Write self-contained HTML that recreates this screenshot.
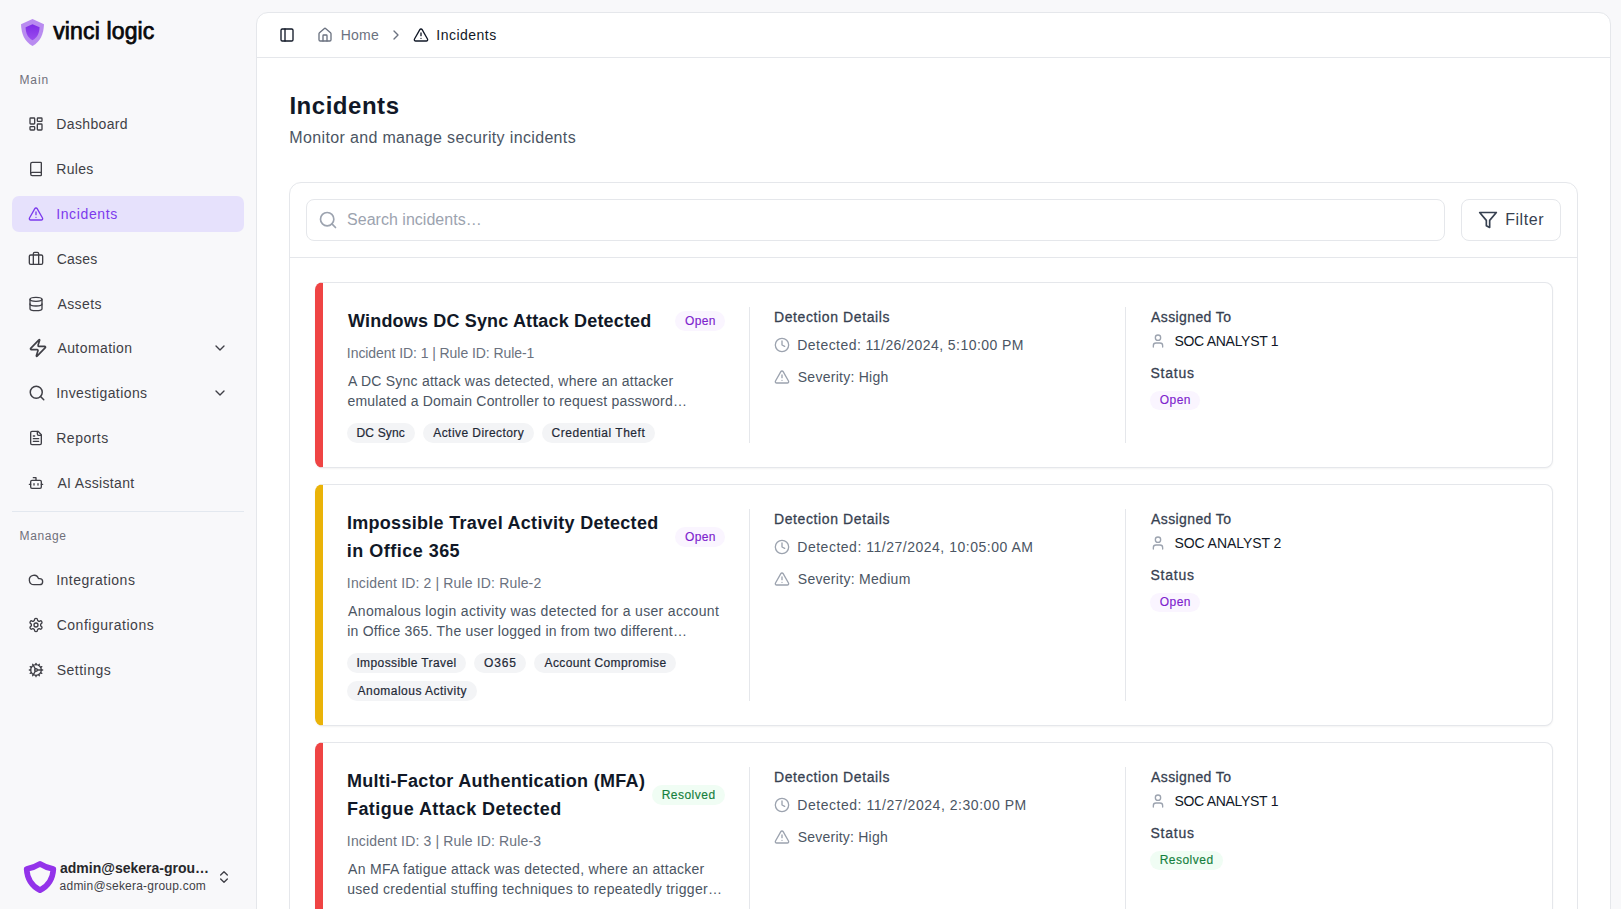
<!DOCTYPE html>
<html><head><meta charset="utf-8"><style>
*{box-sizing:border-box;margin:0;padding:0}
html,body{width:1621px;height:909px;overflow:hidden}
body{background:#f8f8fa;font-family:"Liberation Sans",sans-serif;position:relative}
.abs{position:absolute}
.t{position:absolute;white-space:nowrap}
svg.i{position:absolute;fill:none;stroke:currentColor;stroke-width:2;stroke-linecap:round;stroke-linejoin:round;overflow:visible}
</style></head><body>
<svg class="abs" style="left:21px;top:19px" width="23" height="27" viewBox="0 0 23 27"><defs><linearGradient id="lg" x1="0" y1="0" x2="0" y2="1"><stop offset="0" stop-color="#7e2ae6"/><stop offset="1" stop-color="#9a4cee"/></linearGradient></defs><path d="M11.5 0 L23 5.2 C22.6 15 19.5 22.5 11.5 27 C3.5 22.5 0.4 15 0 5.2 Z" fill="#b98bf0"/><path d="M11.5 5.2 L18.6 8.3 C18.3 14.5 16 18.8 11.5 21.2 C7 18.8 4.7 14.5 4.6 8.3 Z" fill="url(#lg)"/></svg>
<div class="t" style="left:53.17px;top:16.63px;font-size:23px;line-height:28px;color:#09090b;letter-spacing:0.150px;-webkit-text-stroke:0.75px #09090b;">vinci logic</div>
<div class="t" style="left:19.40px;top:71.64px;font-size:12px;line-height:16px;color:#70707b;letter-spacing:0.917px;">Main</div>
<svg class="i" style="left:28px;top:116px;width:16px;height:16px;color:#3f3f46;stroke-width:2" viewBox="0 0 24 24"><rect width="7" height="9" x="3" y="3" rx="1"/><rect width="7" height="5" x="14" y="3" rx="1"/><rect width="7" height="9" x="14" y="12" rx="1"/><rect width="7" height="5" x="3" y="16" rx="1"/></svg>
<div class="t" style="left:56.27px;top:114.15px;font-size:14px;line-height:20px;color:#3f3f46;letter-spacing:0.363px;">Dashboard</div>
<svg class="i" style="left:28px;top:161px;width:16px;height:16px;color:#3f3f46;stroke-width:2" viewBox="0 0 24 24"><path d="M4 19.5v-15A2.5 2.5 0 0 1 6.5 2H19a1 1 0 0 1 1 1v18a1 1 0 0 1-1 1H6.5a1 1 0 0 1 0-5H20"/></svg>
<div class="t" style="left:56.27px;top:159.15px;font-size:14px;line-height:20px;color:#3f3f46;letter-spacing:0.294px;">Rules</div>
<div class="abs" style="left:12px;top:196px;width:232px;height:36px;background:#e6e1fc;border-radius:7px"></div>
<svg class="i" style="left:28px;top:206px;width:16px;height:16px;color:#7c3aed;stroke-width:2" viewBox="0 0 24 24"><path d="m21.73 18-8-14a2 2 0 0 0-3.48 0l-8 14A2 2 0 0 0 4 21h16a2 2 0 0 0 1.73-3"/><path d="M12 9v4"/><path d="M12 17h.01"/></svg>
<div class="t" style="left:56.15px;top:204.15px;font-size:14px;line-height:20px;color:#7c3aed;letter-spacing:0.644px;">Incidents</div>
<svg class="i" style="left:28px;top:251px;width:16px;height:16px;color:#3f3f46;stroke-width:2" viewBox="0 0 24 24"><path d="M16 20V4a2 2 0 0 0-2-2h-4a2 2 0 0 0-2 2v16"/><rect width="20" height="14" x="2" y="6" rx="2"/></svg>
<div class="t" style="left:56.65px;top:249.15px;font-size:14px;line-height:20px;color:#3f3f46;letter-spacing:0.256px;">Cases</div>
<svg class="i" style="left:28px;top:296px;width:16px;height:16px;color:#3f3f46;stroke-width:2" viewBox="0 0 24 24"><ellipse cx="12" cy="5" rx="9" ry="3"/><path d="M3 5V19A9 3 0 0 0 21 19V5"/><path d="M3 12A9 3 0 0 0 21 12"/></svg>
<div class="t" style="left:57.40px;top:294.15px;font-size:14px;line-height:20px;color:#3f3f46;letter-spacing:0.440px;">Assets</div>
<svg class="i" style="left:28px;top:338px;width:20px;height:20px;color:#3f3f46;stroke-width:2" viewBox="0 0 24 24"><path d="M4 14a1 1 0 0 1-.78-1.63l9.9-10.2a.5.5 0 0 1 .86.46l-1.92 6.02A1 1 0 0 0 13 10h7a1 1 0 0 1 .78 1.63l-9.9 10.2a.5.5 0 0 1-.86-.46l1.92-6.02A1 1 0 0 0 11 14z"/></svg>
<div class="t" style="left:57.40px;top:337.85px;font-size:14px;line-height:20px;color:#3f3f46;letter-spacing:0.425px;">Automation</div>
<svg class="i" style="left:212px;top:340px;width:16px;height:16px;color:#3f3f46;stroke-width:2" viewBox="0 0 24 24"><path d="m6 9 6 6 6-6"/></svg>
<svg class="i" style="left:28px;top:384px;width:18px;height:18px;color:#3f3f46;stroke-width:2" viewBox="0 0 24 24"><circle cx="11" cy="11" r="8"/><path d="m21 21-4.3-4.3"/></svg>
<div class="t" style="left:56.15px;top:383.15px;font-size:14px;line-height:20px;color:#3f3f46;letter-spacing:0.410px;">Investigations</div>
<svg class="i" style="left:212px;top:385px;width:16px;height:16px;color:#3f3f46;stroke-width:2" viewBox="0 0 24 24"><path d="m6 9 6 6 6-6"/></svg>
<svg class="i" style="left:28px;top:430px;width:16px;height:16px;color:#3f3f46;stroke-width:2" viewBox="0 0 24 24"><path d="M15 2H6a2 2 0 0 0-2 2v16a2 2 0 0 0 2 2h12a2 2 0 0 0 2-2V7Z"/><path d="M14 2v4a2 2 0 0 0 2 2h4"/><path d="M10 9H8"/><path d="M16 13H8"/><path d="M16 17H8"/></svg>
<div class="t" style="left:56.27px;top:427.95px;font-size:14px;line-height:20px;color:#3f3f46;letter-spacing:0.487px;">Reports</div>
<svg class="i" style="left:28px;top:475px;width:16px;height:16px;color:#3f3f46;stroke-width:2" viewBox="0 0 24 24"><path d="M12 8V4H8"/><rect width="16" height="12" x="4" y="8" rx="2"/><path d="M2 14h2"/><path d="M20 14h2"/><path d="M15 13v2"/><path d="M9 13v2"/></svg>
<div class="t" style="left:57.40px;top:473.15px;font-size:14px;line-height:20px;color:#3f3f46;letter-spacing:0.327px;">AI Assistant</div>
<svg class="i" style="left:28px;top:572px;width:16px;height:16px;color:#3f3f46;stroke-width:2" viewBox="0 0 24 24"><path d="M17.5 19H9a7 7 0 1 1 6.71-9h1.79a4.5 4.5 0 1 1 0 9Z"/></svg>
<div class="t" style="left:56.15px;top:570.15px;font-size:14px;line-height:20px;color:#3f3f46;letter-spacing:0.511px;">Integrations</div>
<svg class="i" style="left:28px;top:617px;width:16px;height:16px;color:#3f3f46;stroke-width:2" viewBox="0 0 24 24"><path d="M12.22 2h-.44a2 2 0 0 0-2 2v.18a2 2 0 0 1-1 1.73l-.43.25a2 2 0 0 1-2 0l-.15-.08a2 2 0 0 0-2.73.73l-.22.38a2 2 0 0 0 .73 2.73l.15.1a2 2 0 0 1 1 1.72v.51a2 2 0 0 1-1 1.74l-.15.09a2 2 0 0 0-.73 2.73l.22.38a2 2 0 0 0 2.73.73l.15-.08a2 2 0 0 1 2 0l.43.25a2 2 0 0 1 1 1.73V20a2 2 0 0 0 2 2h.44a2 2 0 0 0 2-2v-.18a2 2 0 0 1 1-1.73l.43-.25a2 2 0 0 1 2 0l.15.08a2 2 0 0 0 2.73-.73l.22-.39a2 2 0 0 0-.73-2.73l-.15-.08a2 2 0 0 1-1-1.74v-.5a2 2 0 0 1 1-1.74l.15-.09a2 2 0 0 0 .73-2.73l-.22-.38a2 2 0 0 0-2.73-.73l-.15.08a2 2 0 0 1-2 0l-.43-.25a2 2 0 0 1-1-1.73V4a2 2 0 0 0-2-2z"/><circle cx="12" cy="12" r="3"/></svg>
<div class="t" style="left:56.65px;top:615.15px;font-size:14px;line-height:20px;color:#3f3f46;letter-spacing:0.523px;">Configurations</div>
<svg class="i" style="left:28px;top:662px;width:16px;height:16px;color:#3f3f46;stroke-width:2" viewBox="0 0 24 24"><path d="M12 20a8 8 0 1 0 0-16 8 8 0 0 0 0 16Z"/><path d="M12 14a2 2 0 1 0 0-4 2 2 0 0 0 0 4Z"/><path d="M12 2v2"/><path d="M12 22v-2"/><path d="m17 20.66-1-1.73"/><path d="M11 10.27 7 3.34"/><path d="m20.66 17-1.73-1"/><path d="m3.34 7 1.73 1"/><path d="M14 12h8"/><path d="M2 12h2"/><path d="m20.66 7-1.73 1"/><path d="m3.34 17 1.73-1"/><path d="m17 3.34-1 1.73"/><path d="m11 13.73-4 6.93"/></svg>
<div class="t" style="left:56.77px;top:660.15px;font-size:14px;line-height:20px;color:#3f3f46;letter-spacing:0.471px;">Settings</div>
<div class="abs" style="left:12px;top:511px;width:232px;height:1px;background:#e3e8ef"></div>
<div class="t" style="left:19.60px;top:527.84px;font-size:12px;line-height:16px;color:#70707b;letter-spacing:0.605px;">Manage</div>
<svg class="abs" style="left:22px;top:859px" width="36" height="36" viewBox="0 0 36 36"><path d="M18 4.8 C14 7.4 9.5 9 4.6 9.9 C5.2 20.5 10 27.2 18 31.3 C26 27.2 30.8 20.5 31.4 9.9 C26.5 9 22 7.4 18 4.8 Z" fill="none" stroke="#9333ea" stroke-width="5.6" stroke-linejoin="round"/></svg>
<div class="t" style="left:60px;top:859.85px;font-size:14px;line-height:17px;font-weight:700;color:#27272a;width:150px;overflow:hidden;text-overflow:ellipsis">admin@sekera-group.com</div>
<div class="t" style="left:59.60px;top:877.84px;font-size:12px;line-height:16px;color:#3f3f46;letter-spacing:0.220px;">admin@sekera-group.com</div>
<svg class="i" style="left:216px;top:869px;width:16px;height:16px;color:#3f3f46;stroke-width:2" viewBox="0 0 24 24"><path d="m7 15 5 5 5-5"/><path d="m7 9 5-5 5 5"/></svg>
<div class="abs" style="left:256px;top:12px;width:1355px;height:960px;background:#fff;border:1px solid #e5e7eb;border-radius:12px"></div>
<div class="abs" style="left:257px;top:57px;width:1353px;height:1px;background:#e5e7eb"></div>
<svg class="i" style="left:279px;top:27px;width:16px;height:16px;color:#111827;stroke-width:2" viewBox="0 0 24 24"><rect width="18" height="18" x="3" y="3" rx="2"/><path d="M9 3v18"/></svg>
<svg class="i" style="left:317px;top:27px;width:16px;height:16px;color:#6b7280;stroke-width:2" viewBox="0 0 24 24"><path d="M15 21v-8a1 1 0 0 0-1-1h-4a1 1 0 0 0-1 1v8"/><path d="M3 10a2 2 0 0 1 .709-1.528l7-5.999a2 2 0 0 1 2.582 0l7 5.999A2 2 0 0 1 21 10v9a2 2 0 0 1-2 2H5a2 2 0 0 1-2-2z"/></svg>
<div class="t" style="left:340.68px;top:24.85px;font-size:14px;line-height:20px;color:#6b7280;letter-spacing:0.233px;">Home</div>
<svg class="i" style="left:388px;top:27px;width:16px;height:16px;color:#6b7280;stroke-width:2" viewBox="0 0 24 24"><path d="m9 18 6-6-6-6"/></svg>
<svg class="i" style="left:413px;top:27px;width:16px;height:16px;color:#111827;stroke-width:2" viewBox="0 0 24 24"><path d="m21.73 18-8-14a2 2 0 0 0-3.48 0l-8 14A2 2 0 0 0 4 21h16a2 2 0 0 0 1.73-3"/><path d="M12 9v4"/><path d="M12 17h.01"/></svg>
<div class="t" style="left:436.25px;top:24.85px;font-size:14px;line-height:20px;color:#111827;letter-spacing:0.494px;">Incidents</div>
<div class="t" style="left:289.38px;top:90.28px;font-size:24px;line-height:32px;color:#111827;font-weight:700;letter-spacing:0.531px;">Incidents</div>
<div class="t" style="left:289.35px;top:126.06px;font-size:16px;line-height:24px;color:#4b5563;letter-spacing:0.344px;">Monitor and manage security incidents</div>
<div class="abs" style="left:289px;top:182px;width:1289px;height:800px;border:1px solid #e5e7eb;border-radius:12px"></div>
<div class="abs" style="left:306px;top:199px;width:1139px;height:42px;border:1px solid #e5e7eb;border-radius:8px"></div>
<svg class="i" style="left:318px;top:210px;width:20px;height:20px;color:#9ca3af;stroke-width:2" viewBox="0 0 24 24"><circle cx="11" cy="11" r="8"/><path d="m21 21-4.3-4.3"/></svg>
<div class="t" style="left:347.05px;top:207.66px;font-size:16px;line-height:24px;color:#9ca3af;letter-spacing:0.020px;">Search incidents…</div>
<div class="abs" style="left:1461px;top:199px;width:100px;height:42px;border:1px solid #e5e7eb;border-radius:8px"></div>
<svg class="i" style="left:1478px;top:210px;width:20px;height:20px;color:#374151;stroke-width:2" viewBox="0 0 24 24"><polygon points="22 3 2 3 10 12.46 10 19 14 21 14 12.46 22 3"/></svg>
<div class="t" style="left:1505.15px;top:207.66px;font-size:16px;line-height:24px;color:#374151;letter-spacing:0.575px;">Filter</div>
<div class="abs" style="left:290px;top:257px;width:1287px;height:1px;background:#e5e7eb"></div>
<div class="abs" style="left:315px;top:282px;width:1238px;height:186px;background:#fff;border:1px solid #e5e7eb;border-left:8px solid #ef4444;border-radius:8px;box-shadow:0 1px 2px rgba(0,0,0,.05)"></div>
<div class="t" style="left:348.10px;top:307.16px;font-size:18px;line-height:28px;color:#111827;font-weight:700;letter-spacing:0.163px;">Windows DC Sync Attack Detected</div>
<div class="abs" style="left:675px;top:311px;width:50px;height:20px;background:#faf5ff;border-radius:10.0px"></div><div class="t" style="left:685.00px;top:312.74px;font-size:12px;line-height:16px;color:#7e22ce;letter-spacing:0.333px;-webkit-text-stroke:0.15px #7e22ce;">Open</div>
<div class="t" style="left:346.85px;top:343.15px;font-size:14px;line-height:20px;color:#6b7280;letter-spacing:-0.069px;">Incident ID: 1 | Rule ID: Rule-1</div>
<div class="t" style="left:348.10px;top:371.15px;font-size:14px;line-height:20px;color:#4b5563;letter-spacing:0.229px;">A DC Sync attack was detected, where an attacker</div>
<div class="t" style="left:347.48px;top:391.15px;font-size:14px;line-height:20px;color:#4b5563;letter-spacing:0.198px;">emulated a Domain Controller to request password…</div>
<div class="abs" style="left:347px;top:423px;width:68px;height:20px;background:#f3f4f6;border-radius:10px"></div><div class="t" style="left:356.50px;top:425.14px;font-size:12px;line-height:16px;color:#1f2937;letter-spacing:0.167px;-webkit-text-stroke:0.2px #1f2937;">DC Sync</div>
<div class="abs" style="left:423px;top:423px;width:111px;height:20px;background:#f3f4f6;border-radius:10px"></div><div class="t" style="left:433.25px;top:425.14px;font-size:12px;line-height:16px;color:#1f2937;letter-spacing:0.433px;-webkit-text-stroke:0.2px #1f2937;">Active Directory</div>
<div class="abs" style="left:542px;top:423px;width:113px;height:20px;background:#f3f4f6;border-radius:10px"></div><div class="t" style="left:551.62px;top:425.14px;font-size:12px;line-height:16px;color:#1f2937;letter-spacing:0.533px;-webkit-text-stroke:0.2px #1f2937;">Credential Theft</div>
<div class="abs" style="left:749px;top:307px;width:1px;height:136px;background:#e5e7eb"></div>
<div class="abs" style="left:1125px;top:307px;width:1px;height:136px;background:#e5e7eb"></div>
<div class="t" style="left:773.98px;top:306.95px;font-size:14px;line-height:20px;color:#374151;letter-spacing:0.609px;-webkit-text-stroke:0.28px #374151;">Detection Details</div>
<svg class="i" style="left:774px;top:337px;width:16px;height:16px;color:#9ca3af;stroke-width:2" viewBox="0 0 24 24"><circle cx="12" cy="12" r="10"/><polyline points="12 6 12 12 16 14"/></svg>
<div class="t" style="left:797.27px;top:334.85px;font-size:14px;line-height:20px;color:#4b5563;letter-spacing:0.452px;">Detected: 11/26/2024, 5:10:00 PM</div>
<svg class="i" style="left:774px;top:369px;width:16px;height:16px;color:#9ca3af;stroke-width:2" viewBox="0 0 24 24"><path d="m21.73 18-8-14a2 2 0 0 0-3.48 0l-8 14A2 2 0 0 0 4 21h16a2 2 0 0 0 1.73-3"/><path d="M12 9v4"/><path d="M12 17h.01"/></svg>
<div class="t" style="left:797.77px;top:366.95px;font-size:14px;line-height:20px;color:#4b5563;letter-spacing:0.260px;">Severity: High</div>
<div class="t" style="left:1151.00px;top:306.95px;font-size:14px;line-height:20px;color:#374151;letter-spacing:0.400px;-webkit-text-stroke:0.28px #374151;">Assigned To</div>
<svg class="i" style="left:1150px;top:333px;width:16px;height:16px;color:#9ca3af;stroke-width:2" viewBox="0 0 24 24"><path d="M19 21v-2a4 4 0 0 0-4-4H9a4 4 0 0 0-4 4v2"/><circle cx="12" cy="7" r="4"/></svg>
<div class="t" style="left:1174.38px;top:330.65px;font-size:14px;line-height:20px;color:#111827;letter-spacing:-0.281px;">SOC ANALYST 1</div>
<div class="t" style="left:1150.38px;top:363.05px;font-size:14px;line-height:20px;color:#374151;letter-spacing:0.795px;-webkit-text-stroke:0.28px #374151;">Status</div>
<div class="abs" style="left:1150px;top:391px;width:50px;height:19px;background:#faf5ff;border-radius:9.5px"></div><div class="t" style="left:1159.85px;top:392.24px;font-size:12px;line-height:16px;color:#7e22ce;letter-spacing:0.433px;-webkit-text-stroke:0.15px #7e22ce;">Open</div>
<div class="abs" style="left:315px;top:484px;width:1238px;height:242px;background:#fff;border:1px solid #e5e7eb;border-left:8px solid #eab308;border-radius:8px;box-shadow:0 1px 2px rgba(0,0,0,.05)"></div>
<div class="t" style="left:346.98px;top:509.16px;font-size:18px;line-height:28px;color:#111827;font-weight:700;letter-spacing:0.287px;">Impossible Travel Activity Detected</div>
<div class="t" style="left:346.85px;top:537.16px;font-size:18px;line-height:28px;color:#111827;font-weight:700;letter-spacing:0.479px;">in Office 365</div>
<div class="abs" style="left:675px;top:527px;width:50px;height:20px;background:#faf5ff;border-radius:10.0px"></div><div class="t" style="left:685.00px;top:528.74px;font-size:12px;line-height:16px;color:#7e22ce;letter-spacing:0.333px;-webkit-text-stroke:0.15px #7e22ce;">Open</div>
<div class="t" style="left:346.85px;top:573.15px;font-size:14px;line-height:20px;color:#6b7280;letter-spacing:0.153px;">Incident ID: 2 | Rule ID: Rule-2</div>
<div class="t" style="left:348.10px;top:601.15px;font-size:14px;line-height:20px;color:#4b5563;letter-spacing:0.331px;">Anomalous login activity was detected for a user account</div>
<div class="t" style="left:347.23px;top:621.15px;font-size:14px;line-height:20px;color:#4b5563;letter-spacing:0.233px;">in Office 365. The user logged in from two different…</div>
<div class="abs" style="left:347px;top:653px;width:119px;height:20px;background:#f3f4f6;border-radius:10px"></div><div class="t" style="left:356.38px;top:655.14px;font-size:12px;line-height:16px;color:#1f2937;letter-spacing:0.406px;-webkit-text-stroke:0.2px #1f2937;">Impossible Travel</div>
<div class="abs" style="left:474px;top:653px;width:52px;height:20px;background:#f3f4f6;border-radius:10px"></div><div class="t" style="left:484.00px;top:655.14px;font-size:12px;line-height:16px;color:#1f2937;letter-spacing:0.875px;-webkit-text-stroke:0.2px #1f2937;">O365</div>
<div class="abs" style="left:534px;top:653px;width:142px;height:20px;background:#f3f4f6;border-radius:10px"></div><div class="t" style="left:544.50px;top:655.14px;font-size:12px;line-height:16px;color:#1f2937;letter-spacing:0.404px;-webkit-text-stroke:0.2px #1f2937;">Account Compromise</div>
<div class="abs" style="left:347px;top:681px;width:130px;height:20px;background:#f3f4f6;border-radius:10px"></div><div class="t" style="left:357.50px;top:683.14px;font-size:12px;line-height:16px;color:#1f2937;letter-spacing:0.485px;-webkit-text-stroke:0.2px #1f2937;">Anomalous Activity</div>
<div class="abs" style="left:749px;top:509px;width:1px;height:192px;background:#e5e7eb"></div>
<div class="abs" style="left:1125px;top:509px;width:1px;height:192px;background:#e5e7eb"></div>
<div class="t" style="left:773.98px;top:508.95px;font-size:14px;line-height:20px;color:#374151;letter-spacing:0.609px;-webkit-text-stroke:0.28px #374151;">Detection Details</div>
<svg class="i" style="left:774px;top:539px;width:16px;height:16px;color:#9ca3af;stroke-width:2" viewBox="0 0 24 24"><circle cx="12" cy="12" r="10"/><polyline points="12 6 12 12 16 14"/></svg>
<div class="t" style="left:797.27px;top:536.85px;font-size:14px;line-height:20px;color:#4b5563;letter-spacing:0.513px;">Detected: 11/27/2024, 10:05:00 AM</div>
<svg class="i" style="left:774px;top:571px;width:16px;height:16px;color:#9ca3af;stroke-width:2" viewBox="0 0 24 24"><path d="m21.73 18-8-14a2 2 0 0 0-3.48 0l-8 14A2 2 0 0 0 4 21h16a2 2 0 0 0 1.73-3"/><path d="M12 9v4"/><path d="M12 17h.01"/></svg>
<div class="t" style="left:797.77px;top:568.95px;font-size:14px;line-height:20px;color:#4b5563;letter-spacing:0.292px;">Severity: Medium</div>
<div class="t" style="left:1151.00px;top:508.95px;font-size:14px;line-height:20px;color:#374151;letter-spacing:0.400px;-webkit-text-stroke:0.28px #374151;">Assigned To</div>
<svg class="i" style="left:1150px;top:535px;width:16px;height:16px;color:#9ca3af;stroke-width:2" viewBox="0 0 24 24"><path d="M19 21v-2a4 4 0 0 0-4-4H9a4 4 0 0 0-4 4v2"/><circle cx="12" cy="7" r="4"/></svg>
<div class="t" style="left:1174.38px;top:532.65px;font-size:14px;line-height:20px;color:#111827;letter-spacing:-0.056px;">SOC ANALYST 2</div>
<div class="t" style="left:1150.38px;top:565.05px;font-size:14px;line-height:20px;color:#374151;letter-spacing:0.795px;-webkit-text-stroke:0.28px #374151;">Status</div>
<div class="abs" style="left:1150px;top:593px;width:50px;height:19px;background:#faf5ff;border-radius:9.5px"></div><div class="t" style="left:1159.85px;top:594.24px;font-size:12px;line-height:16px;color:#7e22ce;letter-spacing:0.433px;-webkit-text-stroke:0.15px #7e22ce;">Open</div>
<div class="abs" style="left:315px;top:742px;width:1238px;height:400px;background:#fff;border:1px solid #e5e7eb;border-left:8px solid #ef4444;border-radius:8px;box-shadow:0 1px 2px rgba(0,0,0,.05)"></div>
<div class="t" style="left:346.98px;top:767.16px;font-size:18px;line-height:28px;color:#111827;font-weight:700;letter-spacing:0.301px;">Multi-Factor Authentication (MFA)</div>
<div class="t" style="left:346.98px;top:795.16px;font-size:18px;line-height:28px;color:#111827;font-weight:700;letter-spacing:0.449px;">Fatigue Attack Detected</div>
<div class="abs" style="left:652px;top:785px;width:73px;height:20px;background:#f0fdf4;border-radius:10.0px"></div><div class="t" style="left:661.70px;top:786.74px;font-size:12px;line-height:16px;color:#15803d;letter-spacing:0.479px;-webkit-text-stroke:0.15px #15803d;">Resolved</div>
<div class="t" style="left:346.85px;top:831.15px;font-size:14px;line-height:20px;color:#6b7280;letter-spacing:0.149px;">Incident ID: 3 | Rule ID: Rule-3</div>
<div class="t" style="left:348.10px;top:859.15px;font-size:14px;line-height:20px;color:#4b5563;letter-spacing:0.279px;">An MFA fatigue attack was detected, where an attacker</div>
<div class="t" style="left:347.23px;top:879.15px;font-size:14px;line-height:20px;color:#4b5563;letter-spacing:0.298px;">used credential stuffing techniques to repeatedly trigger…</div>
<div class="abs" style="left:749px;top:767px;width:1px;height:1233px;background:#e5e7eb"></div>
<div class="abs" style="left:1125px;top:767px;width:1px;height:1233px;background:#e5e7eb"></div>
<div class="t" style="left:773.98px;top:766.95px;font-size:14px;line-height:20px;color:#374151;letter-spacing:0.609px;-webkit-text-stroke:0.28px #374151;">Detection Details</div>
<svg class="i" style="left:774px;top:797px;width:16px;height:16px;color:#9ca3af;stroke-width:2" viewBox="0 0 24 24"><circle cx="12" cy="12" r="10"/><polyline points="12 6 12 12 16 14"/></svg>
<div class="t" style="left:797.27px;top:794.85px;font-size:14px;line-height:20px;color:#4b5563;letter-spacing:0.539px;">Detected: 11/27/2024, 2:30:00 PM</div>
<svg class="i" style="left:774px;top:829px;width:16px;height:16px;color:#9ca3af;stroke-width:2" viewBox="0 0 24 24"><path d="m21.73 18-8-14a2 2 0 0 0-3.48 0l-8 14A2 2 0 0 0 4 21h16a2 2 0 0 0 1.73-3"/><path d="M12 9v4"/><path d="M12 17h.01"/></svg>
<div class="t" style="left:797.77px;top:826.95px;font-size:14px;line-height:20px;color:#4b5563;letter-spacing:0.213px;">Severity: High</div>
<div class="t" style="left:1151.00px;top:766.95px;font-size:14px;line-height:20px;color:#374151;letter-spacing:0.400px;-webkit-text-stroke:0.28px #374151;">Assigned To</div>
<svg class="i" style="left:1150px;top:793px;width:16px;height:16px;color:#9ca3af;stroke-width:2" viewBox="0 0 24 24"><path d="M19 21v-2a4 4 0 0 0-4-4H9a4 4 0 0 0-4 4v2"/><circle cx="12" cy="7" r="4"/></svg>
<div class="t" style="left:1174.38px;top:790.65px;font-size:14px;line-height:20px;color:#111827;letter-spacing:-0.298px;">SOC ANALYST 1</div>
<div class="t" style="left:1150.38px;top:823.05px;font-size:14px;line-height:20px;color:#374151;letter-spacing:0.795px;-webkit-text-stroke:0.28px #374151;">Status</div>
<div class="abs" style="left:1150px;top:851px;width:73px;height:19px;background:#f0fdf4;border-radius:9.5px"></div><div class="t" style="left:1159.70px;top:852.24px;font-size:12px;line-height:16px;color:#15803d;letter-spacing:0.479px;-webkit-text-stroke:0.15px #15803d;">Resolved</div>
</body></html>
